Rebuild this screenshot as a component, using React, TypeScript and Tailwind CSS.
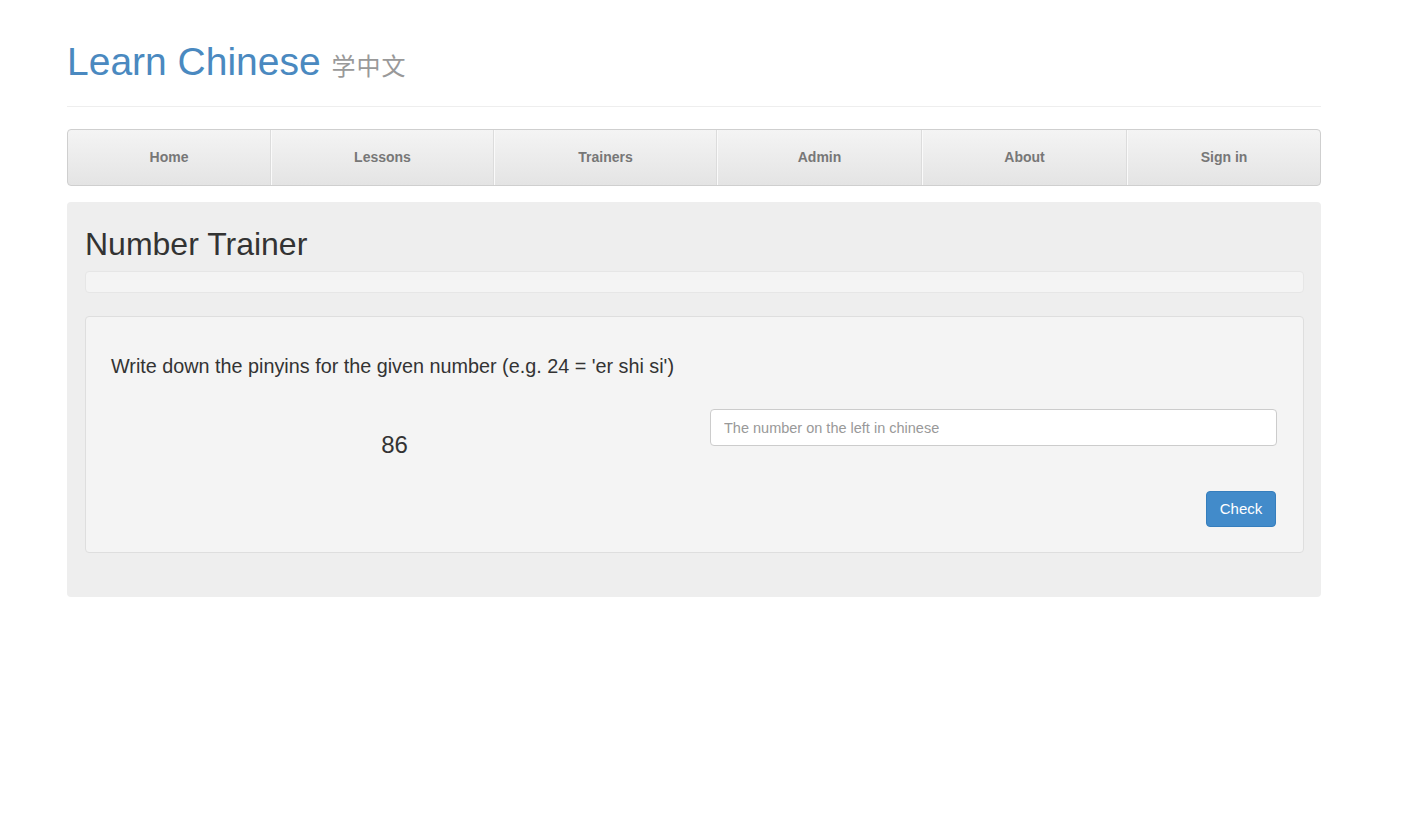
import React from "react";

const navItems = [
  { label: "Home", w: "w-[203px]" },
  { label: "Lessons", w: "w-[223px]" },
  { label: "Trainers", w: "w-[223px]" },
  { label: "Admin", w: "w-[205px]" },
  { label: "About", w: "w-[205px]" },
  { label: "Sign in", w: "flex-1" },
];

export default function App() {
  return (
    <div
      className="min-h-[839px] bg-white text-[#333]"
      style={{ fontFamily: '"Liberation Sans", Arial, "Noto Sans CJK SC", sans-serif' }}
    >
      <div className="w-[1254px] ml-[67px]">
        <div className="pt-[40px] pb-[20px] border-b border-[#eeeeee]">
          <h1 className="text-[39px] leading-[43px] text-[#4a89c0] font-normal">
            Learn Chinese{" "}
            <span className="text-[24px] text-[#999] tracking-[1px]" style={{ fontFamily: '"Noto Sans CJK SC", sans-serif' }}>
              学中文
            </span>
          </h1>
        </div>

        <nav className="mt-[22px] h-[57px] flex rounded-[4px] border border-[#cfcfcf] bg-gradient-to-b from-[#f4f4f4] to-[#e4e4e4] overflow-hidden">
          {navItems.map((it, i) => (
            <div
              key={it.label}
              className={`${it.w} flex items-center justify-center text-[14px] font-bold text-[#777] ${
                i > 0 ? "border-l border-l-[#fafafa]" : ""
              } ${i < navItems.length - 1 ? "border-r border-r-[#dcdcdc]" : ""}`}
            >
              {it.label}
            </div>
          ))}
        </nav>

        <div className="mt-[16px] bg-[#eeeeee] rounded-[4px] pl-[18px] pr-[17px] pt-[25px] pb-[44px]">
          <h2 className="text-[32px] leading-[35px] text-[#333] font-normal">Number Trainer</h2>
          <div className="mt-[9px] h-[22px] bg-[#f4f4f4] border border-[#e6e6e6] rounded-[4px]" />

          <div className="mt-[23px] bg-[#f4f4f4] border border-[#dedede] rounded-[4px] pl-[25px] pr-[26px] pt-[35px] pb-[25px]">
            <p className="text-[19.8px] leading-[28px] text-[#333]">
              Write down the pinyins for the given number (e.g. 24 = 'er shi si')
            </p>
            <div className="mt-[29px] grid grid-cols-2 gap-[32px]">
              <div className="flex justify-center">
                <div className="mt-[20px] text-[24px] leading-[32px] text-[#333]">86</div>
              </div>
              <div>
                <input
                  type="text"
                  placeholder="The number on the left in chinese"
                  className="w-full h-[37px] border border-[#cccccc] rounded-[4px] bg-white px-[13px] text-[14.5px] text-[#555] placeholder:text-[#999] outline-none"
                  style={{ fontFamily: '"Liberation Sans", Arial, sans-serif' }}
                />
                <div className="mt-[45px] flex justify-end pr-[1px]">
                  <button className="w-[70px] h-[36px] rounded-[4px] bg-[#428bca] border border-[#357ebd] text-white text-[15px]">
                    Check
                  </button>
                </div>
              </div>
            </div>
          </div>
        </div>
      </div>
    </div>
  );
}
